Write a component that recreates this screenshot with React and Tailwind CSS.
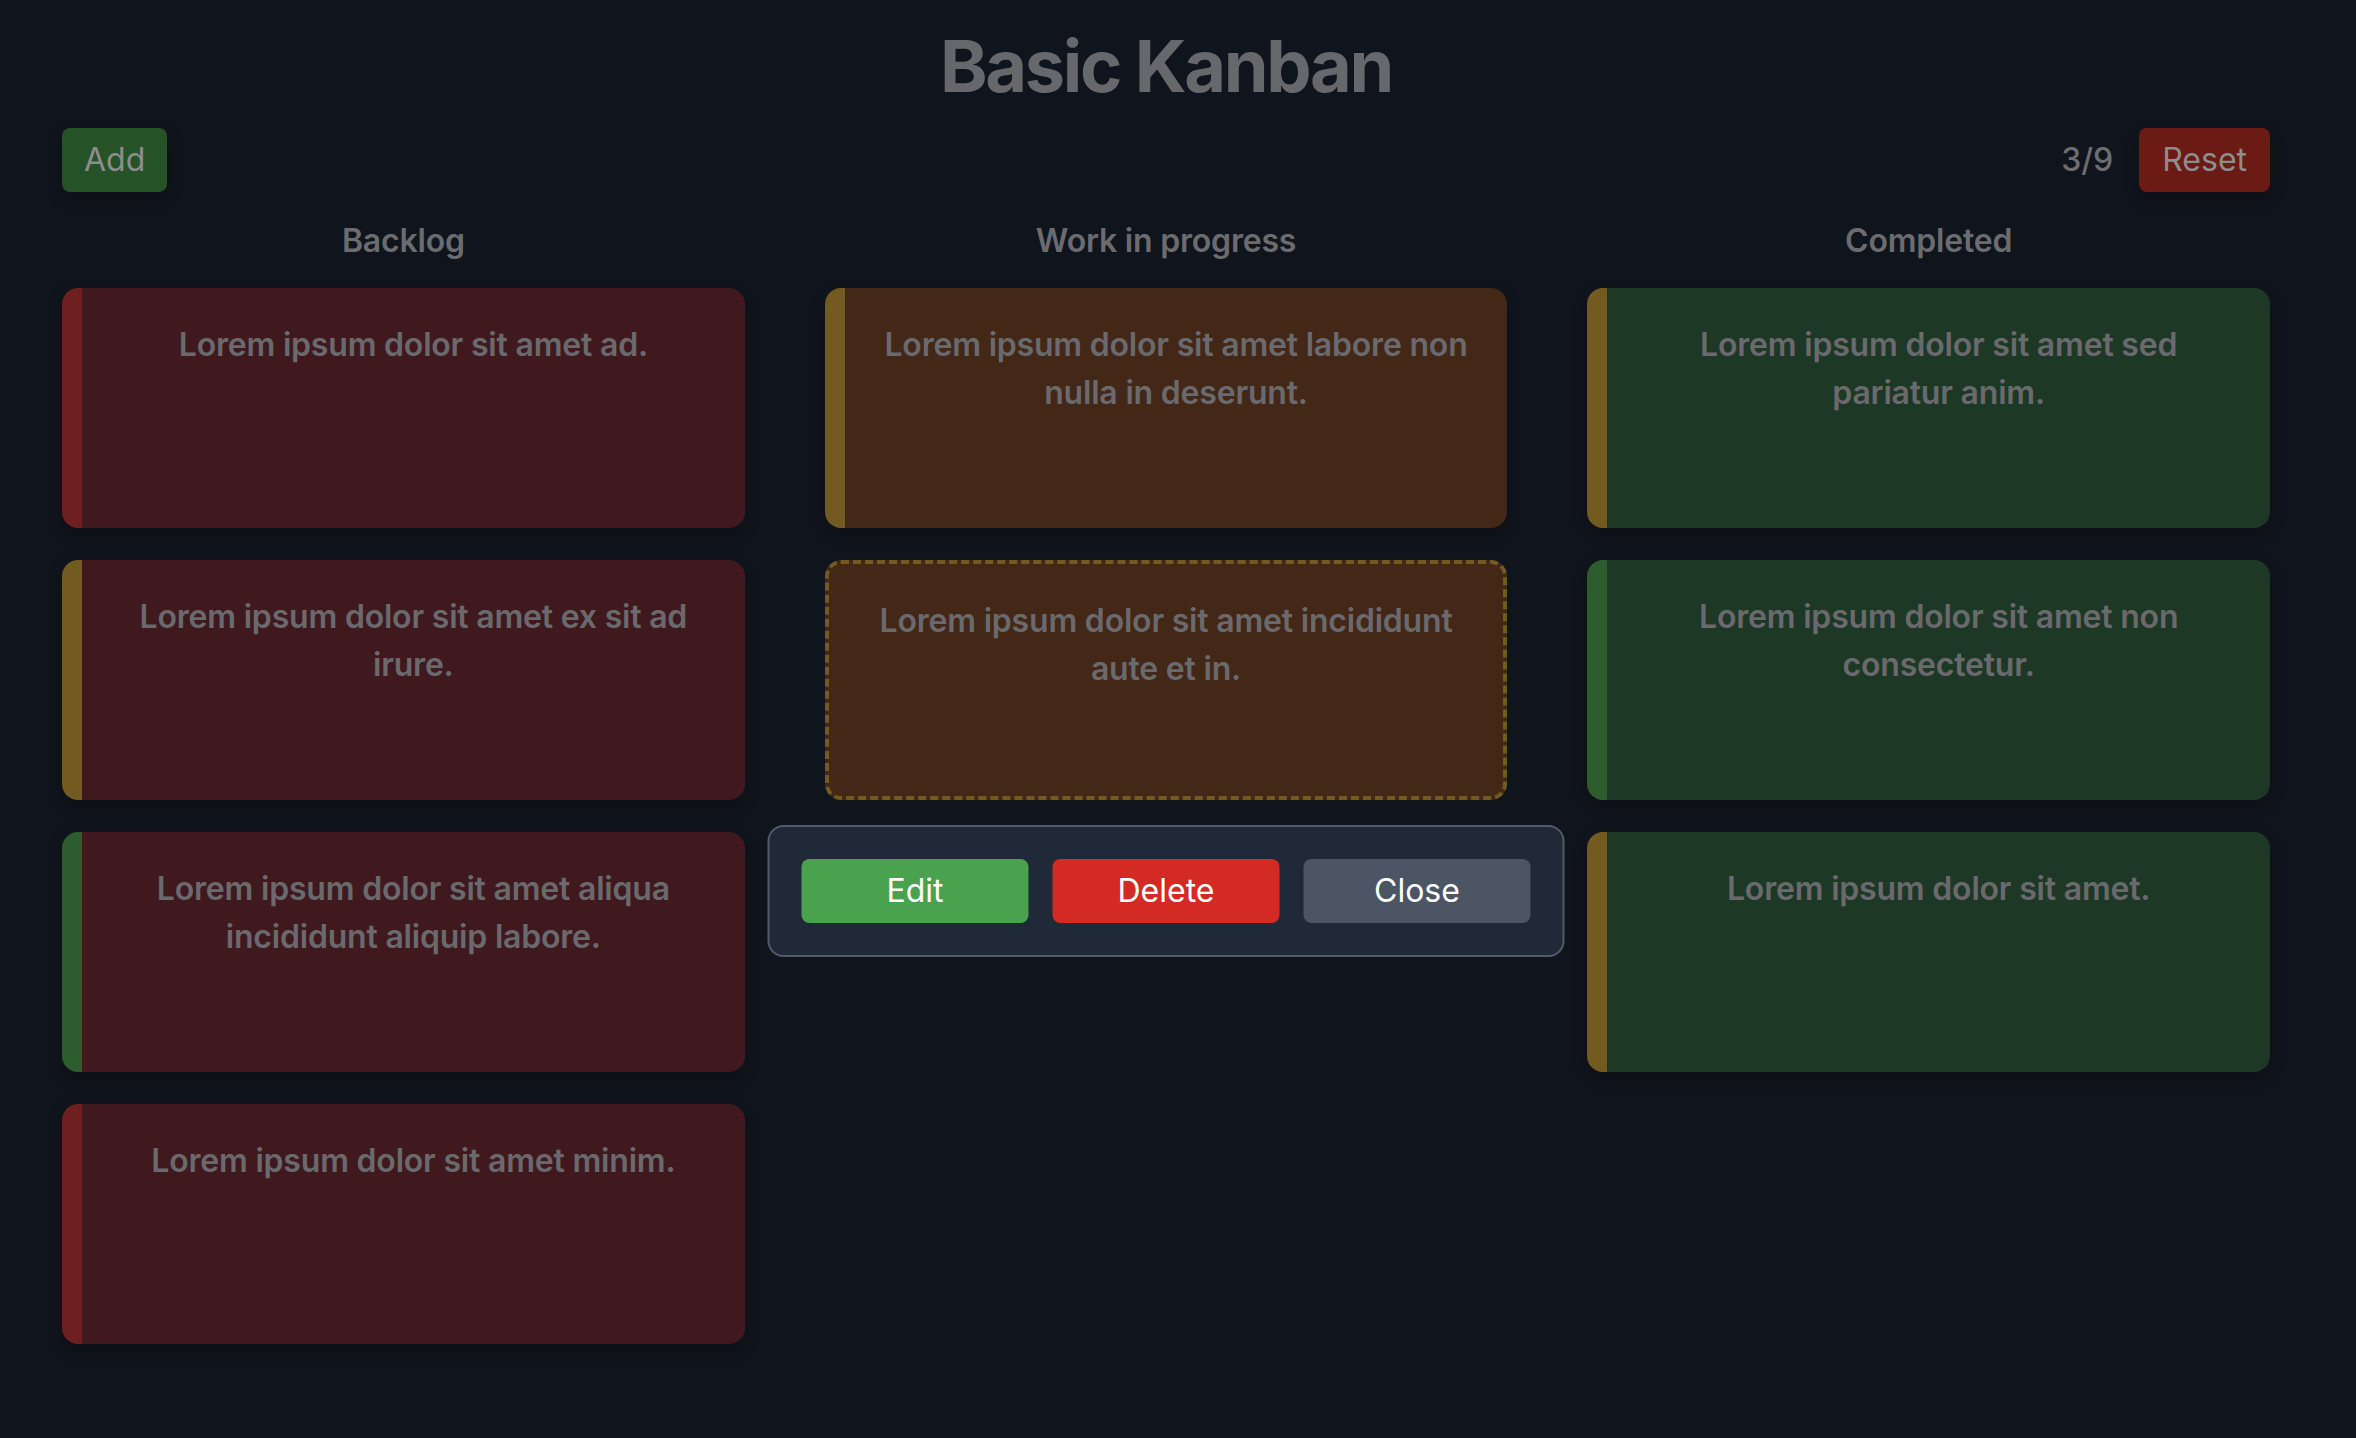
import React from "react";

const font = { fontFamily: "Inter, 'Noto Sans', sans-serif" };

function Card({ text, stripe, bg }) {
  return (
    <div
      className={`h-[240px] rounded-[16px] border-l-[20px] ${stripe} ${bg} pt-[33px] px-8 text-center text-[32px] leading-[48px] font-semibold tracking-[-0.2px] text-[#6a6a6e] shadow-[0_6px_14px_rgba(0,0,0,0.25)]`}
    >
      {text}
    </div>
  );
}

export default function App() {
  return (
    <div className="min-h-screen w-full bg-[#10141c]" style={font}>
      <div className="ml-[62px] w-[2208px] pt-[26px] pb-[60px]">
        <h1 className="text-center text-[72px] leading-[80px] font-bold tracking-[-2.3px] text-[#66686c]">
          Basic Kanban
        </h1>
        <div className="mt-[22px] flex items-center justify-between">
          <button className="h-16 rounded-[8px] bg-[#265227] px-[22px] text-[32px] text-[#8d8d8d] shadow-[0_6px_14px_rgba(0,0,0,0.25)]">
            Add
          </button>
          <div className="flex items-center gap-[26px]">
            <span className="text-[32px] font-medium text-[#6d6d70]">3/9</span>
            <button className="h-16 rounded-[8px] bg-[#6b1a14] px-[23px] text-[32px] text-[#8d8d8d] shadow-[0_6px_14px_rgba(0,0,0,0.25)]">
              Reset
            </button>
          </div>
        </div>
        <div className="mt-[25px] grid grid-cols-3 gap-x-[80px]">
          {/* Backlog */}
          <div className="flex flex-col">
            <h2 className="text-center text-[32px] leading-[48px] font-semibold tracking-[-0.2px] text-[#6b6c70]">Backlog</h2>
            <div className="mt-[23px] flex flex-col gap-8">
              <Card text="Lorem ipsum dolor sit amet ad." stripe="border-[#6e1f1f]" bg="bg-[#40191e]" />
              <Card text="Lorem ipsum dolor sit amet ex sit ad irure." stripe="border-[#735a20]" bg="bg-[#40191e]" />
              <Card text="Lorem ipsum dolor sit amet aliqua incididunt aliquip labore." stripe="border-[#2d5c2e]" bg="bg-[#40191e]" />
              <Card text="Lorem ipsum dolor sit amet minim." stripe="border-[#6e1f1f]" bg="bg-[#40191e]" />
            </div>
          </div>
          {/* WIP */}
          <div className="flex flex-col">
            <h2 className="text-center text-[32px] leading-[48px] font-semibold tracking-[-0.2px] text-[#6b6c70]">Work in progress</h2>
            <div className="mt-[23px] flex flex-col gap-8">
              <Card text="Lorem ipsum dolor sit amet labore non nulla in deserunt." stripe="border-[#735a20]" bg="bg-[#432717]" />
              <div className="relative">
                <div className="h-[240px] rounded-[16px] border-[4px] border-dashed border-[#735a20] bg-[#432717] pt-[33px] px-8 text-center text-[32px] leading-[48px] font-semibold tracking-[-0.2px] text-[#6a6a6e]">
                  Lorem ipsum dolor sit amet incididunt aute et in.
                </div>
                <div className="absolute left-1/2 top-full z-10 mt-[25px] -translate-x-1/2 flex gap-6 rounded-[16px] border-2 border-[#535b69] bg-[#1f2937] p-8">
                  <button className="h-16 w-[227px] rounded-[8px] bg-[#4aa24e] text-[32px] text-white">Edit</button>
                  <button className="h-16 w-[227px] rounded-[8px] bg-[#d32b23] text-[32px] text-white">Delete</button>
                  <button className="h-16 w-[227px] rounded-[8px] bg-[#4b5563] text-[32px] text-white">Close</button>
                </div>
              </div>
            </div>
          </div>
          {/* Completed */}
          <div className="flex flex-col">
            <h2 className="text-center text-[32px] leading-[48px] font-semibold tracking-[-0.2px] text-[#6b6c70]">Completed</h2>
            <div className="mt-[23px] flex flex-col gap-8">
              <Card text="Lorem ipsum dolor sit amet sed pariatur anim." stripe="border-[#735a20]" bg="bg-[#1e3826]" />
              <Card text="Lorem ipsum dolor sit amet non consectetur." stripe="border-[#2d5c2e]" bg="bg-[#1e3826]" />
              <Card text="Lorem ipsum dolor sit amet." stripe="border-[#735a20]" bg="bg-[#1e3826]" />
            </div>
          </div>
        </div>
      </div>
    </div>
  );
}
